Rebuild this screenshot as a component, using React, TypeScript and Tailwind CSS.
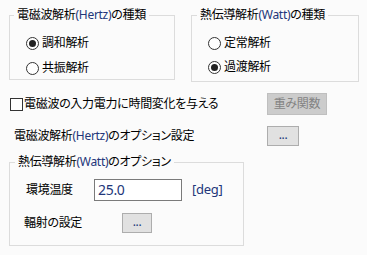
import React from 'react';

const FONT = "font-['Noto_Sans','Noto_Sans_CJK_JP',sans-serif] [font-feature-settings:'palt'] tracking-[-0.3px]";
const LAT = 'text-[#22367a]';

function Radio({ checked, children }: { checked?: boolean; children: React.ReactNode }) {
  return (
    <div className="flex items-center h-[16px]">
      <span className="w-[13px] h-[13px] rounded-full border border-[#333] bg-white flex items-center justify-center">
        {checked && <span className="w-[7px] h-[7px] rounded-full bg-[#222]" />}
      </span>
      <span className="ml-[3px] leading-[16px]">{children}</span>
    </div>
  );
}

function Dots({ className }: { className: string }) {
  return (
    <button className={`${className} bg-[#e1e1e1] border border-[#adadad] flex items-center justify-center text-[12px] leading-none ${LAT}`}>
      <span className="-mt-[2px]">...</span>
    </button>
  );
}

export default function App() {
  return (
    <div className={`w-[367px] h-[255px] bg-[#fbfbfb] text-black text-[12px] pl-[9px] pt-[7px] flex flex-col ${FONT}`}>
      <div className="flex">
        <fieldset className="w-[166px] h-[73px] border border-[#dcdcdc]">
          <legend className="ml-[4px] px-[3px] leading-[16px]">
            電磁波解析<span className={LAT}>(Hertz)</span>の種類
          </legend>
          <div className="ml-[16px] mt-[12px] flex flex-col gap-[9px]">
            <Radio checked>調和解析</Radio>
            <Radio>共振解析</Radio>
          </div>
        </fieldset>
        <fieldset className="ml-[16px] w-[168px] h-[75px] border border-[#dcdcdc]">
          <legend className="ml-[5px] px-[3px] leading-[16px]">
            熱伝導解析<span className={LAT}>(Watt)</span>の種類
          </legend>
          <div className="ml-[16px] mt-[12px] flex flex-col gap-[8px]">
            <Radio>定常解析</Radio>
            <Radio checked>過渡解析</Radio>
          </div>
        </fieldset>
      </div>

      <div className="flex items-center mt-[11px] h-[22px]">
        <div className="w-[258px] flex items-center pl-[1px]">
          <span className="w-[13px] h-[13px] border border-[#333] bg-white" />
          <span className="ml-[1px]">電磁波の入力電力に時間変化を与える</span>
        </div>
        <button className="w-[60px] h-[22px] bg-[#cccccc] border border-[#bfbfbf] text-[#838383] text-[12px] flex items-center justify-center">
          重み関数
        </button>
      </div>

      <div className="flex items-center mt-[11px] h-[20px]">
        <div className="w-[258px] pl-[5px]">
          電磁波解析<span className={LAT}>(Hertz)</span>のオプション設定
        </div>
        <Dots className="w-[32px] h-[20px]" />
      </div>

      <fieldset className="mt-[8px] w-[235px] h-[92px] border border-[#dcdcdc]">
        <legend className="ml-[5px] px-[3px] leading-[16px]">
          熱伝導解析<span className={LAT}>(Watt)</span>のオプション
        </legend>
        <div className="flex items-center mt-[9px] h-[22px]">
          <span className="ml-[16px] w-[68px]">環境温度</span>
          <div className="w-[88px] h-[22px] border border-[#7a7a7a] bg-white flex items-center pl-[3px] text-[14px] leading-none">
            <span className={LAT}>25.0</span>
          </div>
          <span className={`ml-[10px] text-[13px] ${LAT}`}>[deg]</span>
        </div>
        <div className="flex items-center mt-[12px] h-[20px]">
          <span className="ml-[14px] w-[98px]">輻射の設定</span>
          <Dots className="w-[30px] h-[20px]" />
        </div>
      </fieldset>
    </div>
  );
}
